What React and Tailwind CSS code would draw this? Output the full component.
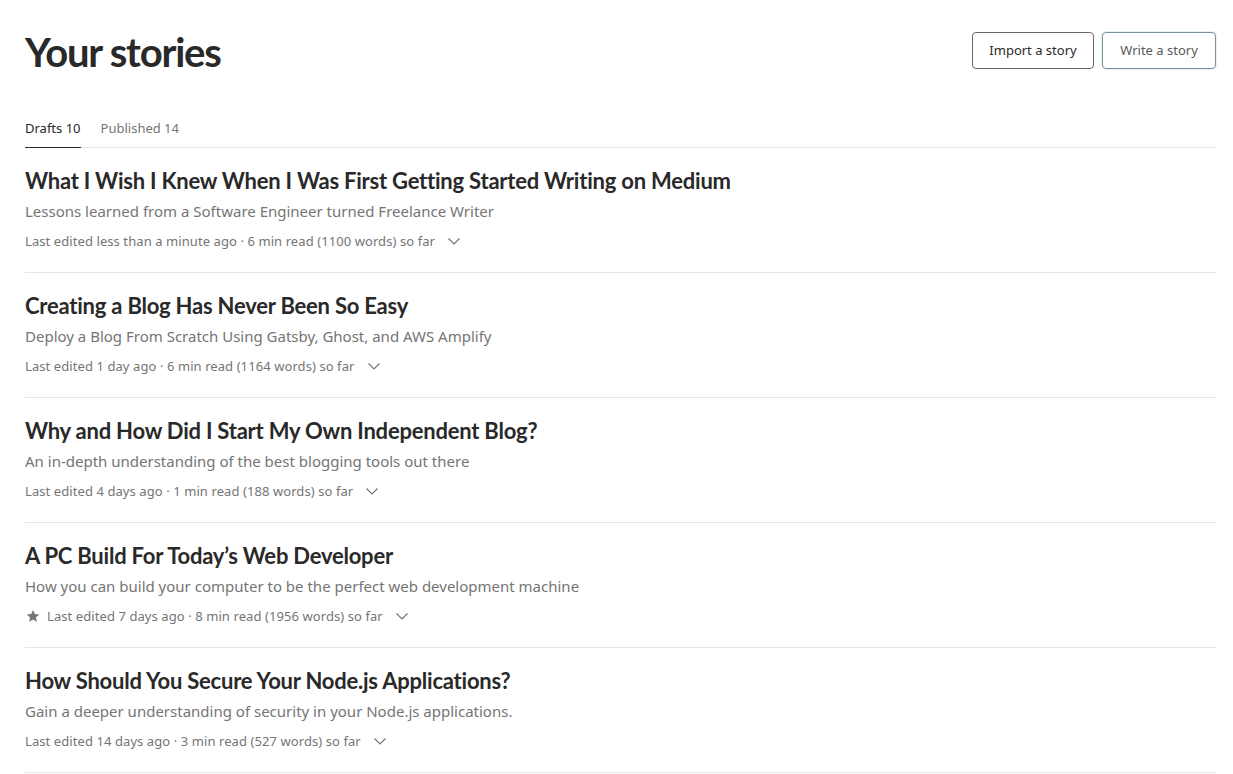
import React from "react";

const stories = [
  {
    title: "What I Wish I Knew When I Was First Getting Started Writing on Medium",
    sub: "Lessons learned from a Software Engineer turned Freelance Writer",
    meta: "Last edited less than a minute ago · 6 min read (1100 words) so far",
  },
  {
    title: "Creating a Blog Has Never Been So Easy",
    sub: "Deploy a Blog From Scratch Using Gatsby, Ghost, and AWS Amplify",
    meta: "Last edited 1 day ago · 6 min read (1164 words) so far",
  },
  {
    title: "Why and How Did I Start My Own Independent Blog?",
    sub: "An in-depth understanding of the best blogging tools out there",
    meta: "Last edited 4 days ago · 1 min read (188 words) so far",
  },
  {
    title: "A PC Build For Today’s Web Developer",
    sub: "How you can build your computer to be the perfect web development machine",
    meta: "Last edited 7 days ago · 8 min read (1956 words) so far",
    star: true,
  },
  {
    title: "How Should You Secure Your Node.js Applications?",
    sub: "Gain a deeper understanding of security in your Node.js applications.",
    meta: "Last edited 14 days ago · 3 min read (527 words) so far",
  },
];

function Chevron() {
  return (
    <svg width="14" height="14" viewBox="0 0 14 14" className="ml-[12px]">
      <path d="M1.5 4.5 L7 10 L12.5 4.5" fill="none" stroke="#757575" strokeWidth="1.2" />
    </svg>
  );
}

function Star() {
  return (
    <svg width="14" height="14" viewBox="0 0 24 24" className="ml-[1px] mr-[7px]">
      <path
        d="M12 1.5l3.1 7.1 7.7.7-5.8 5.1 1.7 7.6L12 18l-6.7 4 1.7-7.6L1.2 9.3l7.7-.7z"
        fill="#757575"
      />
    </svg>
  );
}

export default function App() {
  return (
    <div
      className="min-h-[774px] bg-white pl-[25px] pr-[17px] text-[#292929]"
      style={{ fontFamily: '"Noto Sans", "Open Sans", sans-serif' }}
    >
      <div className="flex items-start justify-between pt-[32px]">
        <h1
          className="mt-[-2px] text-[40px] font-bold leading-[44px] tracking-[-1.2px] text-[#292929]"
          style={{ fontFamily: 'Lato, "Noto Sans", sans-serif' }}
        >
          Your stories
        </h1>
        <div className="flex gap-[8px]">
          <button className="h-[37px] w-[122px] rounded-[4px] border border-[#292929]/70 text-[13px] text-[#292929]">
            Import a story
          </button>
          <button className="h-[37px] w-[114px] rounded-[4px] border border-[#7c8f9b] text-[13px] text-[#5a5a5a] shadow-[0_0_0_1px_#e4f1f7]">
            Write a story
          </button>
        </div>
      </div>

      <div className="mt-[45px] flex border-b border-[#e6e6e6] text-[13px]">
        <div className="mb-[-1px] border-b border-[#292929] pb-[8px] text-[#292929]">
          Drafts 10
        </div>
        <div className="ml-[20px] pb-[8px] text-[#757575]">Published 14</div>
      </div>

      <div>
        {stories.map((s, i) => (
          <div key={i} className="border-b border-[#e6e6e6] pb-[21px] pt-[18px]">
            <div
              className="text-[22px] font-bold leading-[30px] tracking-[-0.22px] text-[#292929]"
              style={{ fontFamily: 'Lato, "Noto Sans", sans-serif' }}
            >
              {s.title}
            </div>
            <div className="mt-[3px] text-[15px] leading-[24px] text-[#757575]">{s.sub}</div>
            <div className="mt-[8px] flex items-center text-[13px] leading-[20px] tracking-[0.08px] text-[#757575]">
              {s.star && <Star />}
              <span>{s.meta}</span>
              <Chevron />
            </div>
          </div>
        ))}
      </div>
    </div>
  );
}
